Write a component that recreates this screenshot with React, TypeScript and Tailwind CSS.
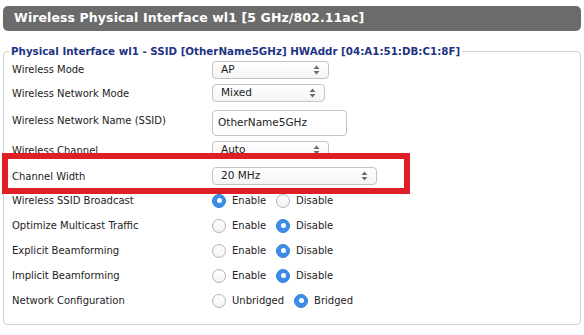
import { ReactNode } from 'react';

const font = { fontFamily: '"DejaVu Sans", Verdana, sans-serif' };

function Arrows() {
  return (
    <svg width="7" height="10" viewBox="0 0 7 10" className="shrink-0">
      <path d="M3.5 0.5 L6.5 4 L0.5 4 Z" fill="#6b6b6b" />
      <path d="M3.5 9.5 L6.5 6 L0.5 6 Z" fill="#6b6b6b" />
    </svg>
  );
}

function Select({ value, width }: { value: string; width: string }) {
  return (
    <div
      className={`${width} h-[18px] flex items-center justify-between pl-[8px] pr-[8px] rounded-[4px] border border-[#c4c4c4] bg-gradient-to-b from-white to-[#f4f4f4] text-[10.5px] text-[#222]`}
    >
      <span>{value}</span>
      <Arrows />
    </div>
  );
}

function Radio({ checked, label }: { checked?: boolean; label: string }) {
  return (
    <div className="flex items-center gap-[6px]">
      {checked ? (
        <span className="w-[14px] h-[14px] rounded-full bg-[#3b8de8] border border-[#2f7fd8] flex items-center justify-center">
          <span className="w-[5px] h-[5px] rounded-full bg-white" />
        </span>
      ) : (
        <span className="w-[14px] h-[14px] rounded-full border border-[#b3b3b3] bg-gradient-to-b from-white to-[#f2f2f2]" />
      )}
      <span>{label}</span>
    </div>
  );
}

function Row({ label, h, children }: { label: string; h: string; children: ReactNode }) {
  return (
    <div className={`flex items-center ${h}`}>
      <div className="w-[200px] shrink-0">{label}</div>
      <div className="flex items-center gap-[10px]">{children}</div>
    </div>
  );
}

export default function App() {
  return (
    <div className="w-[584px] h-[335px] bg-white pt-[6px] px-[3px] text-[#222] relative" style={font}>
      <div className="h-[25px] rounded-[5px] bg-[#6b6b6b] flex items-center pl-[11px] pb-[1px] text-white font-bold text-[12.5px] tracking-[0.1px]">
        Wireless Physical Interface wl1 [5 GHz/802.11ac]
      </div>

      <fieldset className="mt-[13px] border border-[#cfcfcf] rounded-[4px] pl-[8px] pr-2 pb-[11px] pt-0 text-[10px]">
        <legend className="text-[#1f3384] font-bold text-[10.3px] leading-[14px] px-[2px] -ml-[3px]">
          Physical Interface wl1 - SSID [OtherName5GHz] HWAddr [04:A1:51:DB:C1:8F]
        </legend>

        <Row label="Wireless Mode" h="h-[23px]">
          <Select value="AP" width="w-[117px]" />
        </Row>
        <Row label="Wireless Network Mode" h="h-[24px]">
          <Select value="Mixed" width="w-[113px]" />
        </Row>
        <Row label="Wireless Network Name (SSID)" h="h-[31px]">
          <div className="w-[135px] h-[26px] border border-[#c4c4c4] rounded-[4px] flex items-center pl-[5px] text-[10.5px] mt-[5px]">
            OtherName5GHz
          </div>
        </Row>
        <Row label="Wireless Channel" h="h-[28px]">
          <Select value="Auto" width="w-[117px]" />
        </Row>
        <Row label="Channel Width" h="h-[24px]">
          <Select value="20 MHz" width="w-[165px]" />
        </Row>
        <Row label="Wireless SSID Broadcast" h="h-[25px]">
          <Radio checked label="Enable" />
          <Radio label="Disable" />
        </Row>
        <Row label="Optimize Multicast Traffic" h="h-[25px]">
          <Radio label="Enable" />
          <Radio checked label="Disable" />
        </Row>
        <Row label="Explicit Beamforming" h="h-[25px]">
          <Radio label="Enable" />
          <Radio checked label="Disable" />
        </Row>
        <Row label="Implicit Beamforming" h="h-[25px]">
          <Radio label="Enable" />
          <Radio checked label="Disable" />
        </Row>
        <Row label="Network Configuration" h="h-[25px]">
          <Radio label="Unbridged" />
          <Radio checked label="Bridged" />
        </Row>
      </fieldset>

      <div className="absolute left-[2px] top-[153px] w-[408px] h-[41px] border-[6px] border-[#e01e26]" />
    </div>
  );
}
